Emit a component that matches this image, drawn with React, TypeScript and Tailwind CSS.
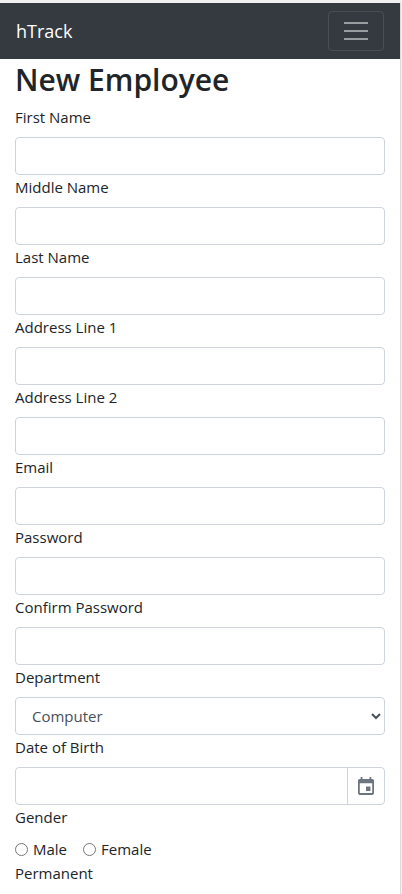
import React from "react";

const control =
  "block h-[38px] w-full rounded border border-[#ced4da] bg-white px-3 text-[15px] text-[#495057] outline-none focus:border-[#80bdff]";

type FieldProps = { id: string; label: string; children: React.ReactNode };

function Field({ id, label, children }: FieldProps) {
  return (
    <div>
      <label htmlFor={id} className="mb-2 block w-fit">
        {label}
      </label>
      {children}
    </div>
  );
}

const textFields = [
  { id: "firstName", label: "First Name", type: "text" },
  { id: "middleName", label: "Middle Name", type: "text" },
  { id: "lastName", label: "Last Name", type: "text" },
  { id: "address1", label: "Address Line 1", type: "text" },
  { id: "address2", label: "Address Line 2", type: "text" },
  { id: "email", label: "Email", type: "email" },
  { id: "password", label: "Password", type: "password" },
  { id: "confirmPassword", label: "Confirm Password", type: "password" },
];

function CalendarIcon() {
  return (
    <svg viewBox="3 1 18 20" className="h-[18px] w-4" fill="currentColor" aria-hidden="true">
      <path d="M17 11.500h-5v5h5v-5zM16 1v2H8V1H6v2H5c-1.100 0-2 .9-2 2v14c0 1.100.9 2 2 2h14c1.100 0 2-.9 2-2V5c0-1.100-.9-2-2-2h-1V1h-2zm3 18H5V8h14v11z" />
    </svg>
  );
}

function Navbar() {
  return (
    <nav className="flex h-14 items-center justify-between bg-[#343a40] px-4">
      <a href="#" className="text-lg text-white">
        hTrack
      </a>
      <button
        type="button"
        aria-label="Toggle navigation"
        className="flex h-10 w-14 items-center justify-center rounded border border-white/10 text-white/50"
      >
        <svg viewBox="0 0 30 30" className="size-[30px]" stroke="currentColor" strokeWidth="2" aria-hidden="true">
          <path d="M3 7h24M3 15h24M3 23h24" />
        </svg>
      </button>
    </nav>
  );
}

export default function App() {
  return (
    <div className="flex min-h-screen flex-col bg-[#f0f0f0] pt-[3px] pr-px font-['Open_Sans','Noto_Sans',sans-serif] text-[15px] leading-6 text-[#212529]">
      <div className="grow border-r border-[#dcdcdc] bg-white">
        <Navbar />
        <form className="px-[15px]">
          <h1 className="mb-1 text-[30px] leading-[42px] font-semibold">New Employee</h1>
          {textFields.map((f) => (
            <Field key={f.id} id={f.id} label={f.label}>
              <input id={f.id} type={f.type} className={control} />
            </Field>
          ))}
          <Field id="department" label="Department">
            <select id="department" className={control} defaultValue="Computer">
              <option>Computer</option>
            </select>
          </Field>
          <Field id="dob" label="Date of Birth">
            <div className="flex h-[38px] rounded border border-[#ced4da] bg-white">
              <input id="dob" type="text" className="min-w-0 grow px-3 outline-none" />
              <button
                type="button"
                aria-label="Open calendar"
                className="flex w-[37px] items-center justify-center border-l border-[#ced4da] text-[#6c757d]"
              >
                <CalendarIcon />
              </button>
            </div>
          </Field>
          <fieldset>
            <legend className="mb-2">Gender</legend>
            <div className="flex gap-4">
              <label className="flex items-center gap-[5px]">
                <input type="radio" name="gender" className="size-[13px]" />
                Male
              </label>
              <label className="flex items-center gap-[5px]">
                <input type="radio" name="gender" className="size-[13px]" />
                Female
              </label>
            </div>
          </fieldset>
          <p>Permanent</p>
        </form>
      </div>
    </div>
  );
}
